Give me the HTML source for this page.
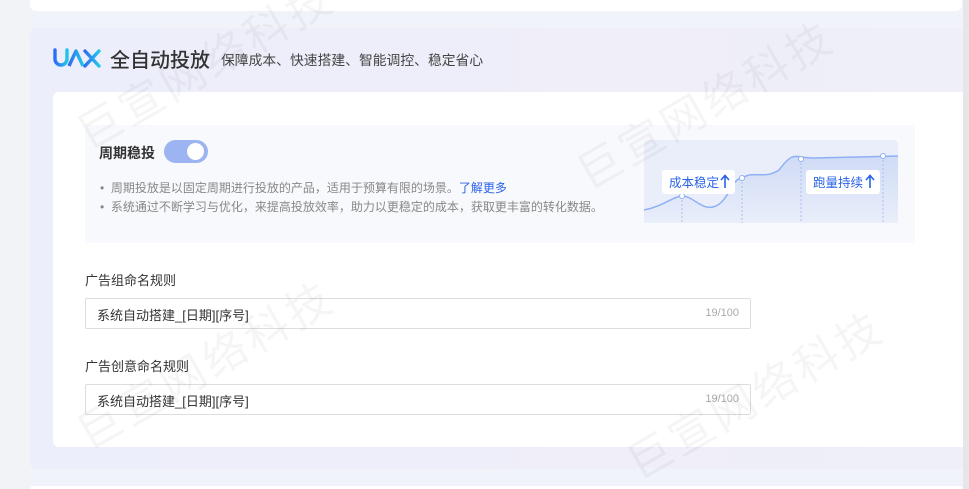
<!DOCTYPE html>
<html style="overflow:hidden;width:969px;height:489px"><head><meta charset="utf-8"><style>
*{margin:0;padding:0;box-sizing:border-box}
body{width:969px;height:489px;overflow:hidden;background:#f1f3fa;font-family:"Liberation Sans","Noto Sans CJK SC",sans-serif;position:relative;color:#333}
.abs{position:absolute}
.wm{position:absolute;font-size:44px;color:rgba(0,0,0,0.04);transform:rotate(-30deg);white-space:nowrap;letter-spacing:4px;pointer-events:none}
</style></head><body>
<div class="abs" style="left:0;top:0;width:30px;height:489px;background:#f2f3f6"></div>
<div class="abs" style="left:963px;top:0;width:6px;height:489px;background:#e6e6e8"></div>
<div class="abs" style="left:30px;top:0;width:932px;height:11px;background:#fff;border-radius:0 0 6px 6px"></div>
<div class="abs" style="left:30px;top:28px;width:933px;height:441px;background:linear-gradient(90deg,#eceefb,#efeef9 60%,#eeeff9);border-radius:6px"></div>
<svg class="abs" style="left:52px;top:47px" width="54" height="22" viewBox="0 0 54 22"><defs><linearGradient id="g" x1="0" x2="1"><stop offset="0" stop-color="#2e6cf6"/><stop offset="1" stop-color="#23c6e8"/></linearGradient></defs><path d="M3 3v9a6 6 0 0 0 12 0V3" fill="none" stroke="url(#g)" stroke-width="3.4" stroke-linecap="round"/><path d="M17 19L24 4L31 19" fill="none" stroke="url(#g)" stroke-width="3.4" stroke-linejoin="round"/><path d="M33 4L47 19M47 4L33 19" stroke="url(#g)" stroke-width="3.4" stroke-linecap="round"/></svg>
<div class="abs" style="left:110px;top:44px;font-size:20px;color:#333;font-weight:500">全自动投放</div>
<div class="abs" style="left:221px;top:49px;font-size:13.8px;color:#444">保障成本、快速搭建、智能调控、稳定省心</div>
<div class="abs" style="left:53px;top:92px;width:910px;height:355px;background:#fff;border-radius:6px 0 0 6px"></div>
<div class="abs" style="left:85px;top:125px;width:830px;height:118px;background:#f8f9fc"></div>
<div class="abs" style="left:99px;top:143px;font-size:14px;font-weight:bold;color:#333">周期稳投</div>
<div class="abs" style="left:164px;top:140px;width:44px;height:23px;border-radius:12px;background:#9db4f3"><div class="abs" style="left:23px;top:3px;width:17px;height:17px;border-radius:50%;background:#fff"></div></div>
<div class="abs" style="left:100px;top:179px;font-size:12px;color:#888;line-height:19px">
<div>•&nbsp;&nbsp;周期投放是以固定周期进行投放的产品，适用于预算有限的场景。<span style="color:#2a63e8">了解更多</span></div>
<div>•&nbsp;&nbsp;系统通过不断学习与优化，来提高投放效率，助力以更稳定的成本，获取更丰富的转化数据。</div></div>
<svg class="abs" style="left:644px;top:140px" width="254" height="83" viewBox="0 0 254 83"><defs><linearGradient id="a" x1="0" y1="0" x2="0" y2="1"><stop offset="0" stop-color="#c9d6f4"/><stop offset="1" stop-color="#e9eefa"/></linearGradient></defs><rect width="254" height="83" rx="4" fill="#eaeefa"/><path d="M0 70C20 66 30 56 38 56C50 56 58 72 72 66C85 60 88 38 98 38C110 30 120 40 135 30C150 10 150 18 170 18L254 16V83H0Z" fill="url(#a)" opacity=".8"/><path d="M0 70C20 66 30 56 38 56C50 56 58 72 72 66C85 60 88 38 98 38C110 30 120 40 135 30C150 10 150 18 170 18L254 16" fill="none" stroke="#8fb0f4" stroke-width="1.5"/><g stroke="#a9c0f2" stroke-dasharray="2 2"><path d="M38 56V83M98 38V83M157 19V83M239 16V83"/></g><g fill="#fff" stroke="#8fb0f4"><circle cx="38" cy="56" r="2.5"/><circle cx="98" cy="38" r="2.5"/><circle cx="157" cy="19" r="2.5"/><circle cx="239" cy="16" r="2.5"/></g><rect x="18" y="30" width="73" height="24" rx="3" fill="#fff"/><text x="25" y="47" font-size="12.5" fill="#2a63e8" font-family="Liberation Sans,Noto Sans CJK SC,sans-serif">成本稳定</text><path d="M81 48V36M77 40L81 35.5L85 40" stroke="#2a63e8" stroke-width="1.6" fill="none"/><rect x="162" y="30" width="74" height="24" rx="3" fill="#fff"/><text x="169" y="47" font-size="12.5" fill="#2a63e8" font-family="Liberation Sans,Noto Sans CJK SC,sans-serif">跑量持续</text><path d="M226 48V36M222 40L226 35.5L230 40" stroke="#2a63e8" stroke-width="1.6" fill="none"/></svg>
<div class="abs" style="left:85px;top:270px;font-size:13px;color:#333">广告组命名规则</div>
<div class="abs" style="left:85px;top:298px;width:666px;height:31px;border:1px solid #ddd;border-radius:2px"><span class="abs" style="left:11px;top:6px;font-size:13px;color:#333">系统自动搭建_[日期][序号]</span><span class="abs" style="right:11px;top:8px;font-size:11px;color:#aaa">19/100</span></div>
<div class="abs" style="left:85px;top:356px;font-size:13px;color:#333">广告创意命名规则</div>
<div class="abs" style="left:85px;top:384px;width:666px;height:31px;border:1px solid #ddd;border-radius:2px"><span class="abs" style="left:11px;top:6px;font-size:13px;color:#333">系统自动搭建_[日期][序号]</span><span class="abs" style="right:11px;top:8px;font-size:11px;color:#aaa">19/100</span></div>
<div class="abs" style="left:30px;top:486px;width:933px;height:3px;background:#fff;border-radius:6px 6px 0 0"></div>
<div class="wm" style="left:60px;top:30px">巨宣网络科技</div>
<div class="wm" style="left:560px;top:70px">巨宣网络科技</div>
<div class="wm" style="left:60px;top:330px">巨宣网络科技</div>
<div class="wm" style="left:610px;top:360px">巨宣网络科技</div>
</body></html>
